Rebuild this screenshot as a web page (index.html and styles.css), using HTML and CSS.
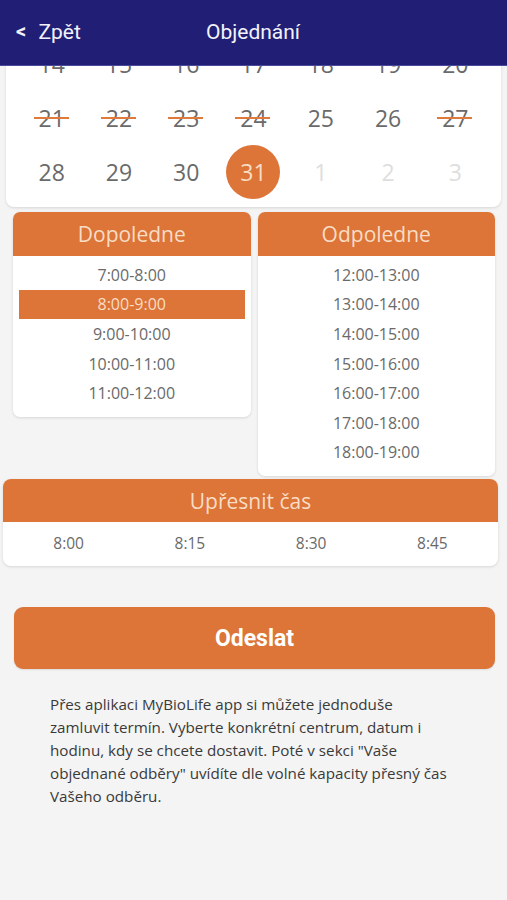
FILE: index.html
```html
<!DOCTYPE html>
<html lang="cs">
<head>
    <meta charset="UTF-8">
    <meta name="viewport" content="width=device-width, initial-scale=1.0">
    <title>Objednání</title>
    <link rel="stylesheet" href="styles.css">
</head>
<body>

<div class="topbar">
    <div class="back"><span class="back-arrow">&lt;</span> Zpět</div>
    <div class="topbar-title">Objednání</div>
</div>

<div class="calendar">
    <div class="cal-row">
        <div class="day">14</div><div class="day">15</div><div class="day">16</div><div class="day">17</div>
        <div class="day">18</div><div class="day">19</div><div class="day">20</div>
    </div>
    <div class="cal-row">
        <div class="day struck">21</div><div class="day struck">22</div><div class="day struck">23</div>
        <div class="day struck">24</div><div class="day">25</div><div class="day">26</div><div class="day struck">27</div>
    </div>
    <div class="cal-row">
        <div class="day">28</div><div class="day">29</div><div class="day">30</div>
        <div class="day"><span class="selected">31</span></div>
        <div class="day other">1</div><div class="day other">2</div><div class="day other">3</div>
    </div>
</div>

<div class="slots">
    <div class="slot-card">
        <div class="card-head">Dopoledne</div>
        <div class="slot-list">
            <div class="slot">7:00-8:00</div>
            <div class="slot active">8:00-9:00</div>
            <div class="slot">9:00-10:00</div>
            <div class="slot">10:00-11:00</div>
            <div class="slot">11:00-12:00</div>
        </div>
    </div>
    <div class="slot-card">
        <div class="card-head">Odpoledne</div>
        <div class="slot-list">
            <div class="slot">12:00-13:00</div>
            <div class="slot">13:00-14:00</div>
            <div class="slot">14:00-15:00</div>
            <div class="slot">15:00-16:00</div>
            <div class="slot">16:00-17:00</div>
            <div class="slot">17:00-18:00</div>
            <div class="slot">18:00-19:00</div>
        </div>
    </div>
</div>

<div class="exact">
    <div class="card-head exact-head">Upřesnit čas</div>
    <div class="exact-row">
        <div>8:00</div>
        <div>8:15</div>
        <div>8:30</div>
        <div>8:45</div>
    </div>
</div>

<button class="send">Odeslat</button>

<p class="info">Přes aplikaci MyBioLife app si můžete jednoduše zamluvit termín. Vyberte konkrétní centrum, datum i hodinu, kdy se chcete dostavit. Poté v sekci "Vaše objednané odběry" uvídíte dle volné kapacity přesný čas Vašeho odběru.</p>

</body>
</html>
```

FILE: styles.css
```css
body {
    margin: 0;
    padding: 0;
    background-color: #f4f4f4;
    font-family: "Open Sans", sans-serif;
    height: 900px;
    overflow: hidden;
}

.topbar {
    position: relative;
    z-index: 2;
    height: 65px;
    background-color: #211f75;
    border-bottom: 1px solid #4a4a9a;
    display: flex;
    align-items: center;
    font-family: Roboto, sans-serif;
    font-size: 21px;
    color: #f2f2fa;
}

.back {
    width: 190px;
    padding-left: 16px;
    box-sizing: border-box;
    padding-bottom: 1px;
}

.back-arrow {
    font-weight: bold;
    font-size: 20px;
    margin-right: 7px;
    position: relative;
    top: -1px;
}

.topbar-title {
    padding-left: 16px;
    padding-bottom: 1px;
}

.calendar {
    margin: -37px 6px 0 6px;
    padding: 8px 12px 8px 12px;
    background: #fff;
    border-radius: 0 0 8px 8px;
    box-shadow: 0 1px 3px rgba(0, 0, 0, 0.12);
}

.cal-row {
    display: grid;
    grid-template-columns: repeat(7, 1fr);
    height: 54px;
}

.day {
    display: flex;
    align-items: center;
    justify-content: center;
    font-size: 23px;
    color: #6a6a6a;
    position: relative;
}

.day.struck::after {
    content: "";
    position: absolute;
    left: 50%;
    top: 50%;
    width: 35px;
    height: 2px;
    margin-left: -18px;
    margin-top: -1px;
    background-color: #e07a3a;
}

.day.other {
    color: #dedede;
}

.selected {
    width: 54px;
    height: 54px;
    border-radius: 50%;
    background-color: #dc7537;
    color: #f9dcc6;
    display: flex;
    align-items: center;
    justify-content: center;
}

.slots {
    display: flex;
    align-items: flex-start;
    gap: 7px;
    padding: 0 12px 0 13px;
    margin-top: 5px;
}

.slot-card {
    flex: 1;
    background: #fff;
    border-radius: 7px;
    box-shadow: 0 1px 3px rgba(0, 0, 0, 0.12);
    overflow: hidden;
}

.card-head {
    height: 44px;
    background-color: #dc7537;
    color: #f9dcc6;
    font-size: 21px;
    display: flex;
    align-items: center;
    justify-content: center;
}

.slot-list {
    padding: 4px 6px 9px 6px;
}

.slot {
    height: 29.6px;
    display: flex;
    align-items: center;
    justify-content: center;
    font-size: 16px;
    color: #6a6a6a;
}

.slot.active {
    background-color: #dc7537;
    color: #f9dcc6;
}

.exact {
    margin: 3px 9px 0 3px;
    background: #fff;
    border-radius: 8px;
    box-shadow: 0 1px 3px rgba(0, 0, 0, 0.12);
    overflow: hidden;
}

.exact-head {
    height: 43px;
}

.exact-row {
    display: grid;
    grid-template-columns: repeat(4, 1fr);
    padding: 0 5px 2px 5px;
    height: 42px;
    align-items: center;
    text-align: center;
    font-size: 15.5px;
    color: #6a6a6a;
}

.send {
    display: block;
    margin: 41px 12px 0 14px;
    width: 481px;
    height: 62px;
    border: none;
    border-radius: 9px;
    background-color: #dc7537;
    color: #fff;
    font-family: Roboto, sans-serif;
    font-weight: bold;
    font-size: 23px;
    box-shadow: 0 1px 2px rgba(0, 0, 0, 0.1);
}

.info {
    margin: 24px 0 0 50px;
    width: 405px;
    font-size: 15.2px;
    line-height: 23px;
    color: #3a3a3a;
}
```
